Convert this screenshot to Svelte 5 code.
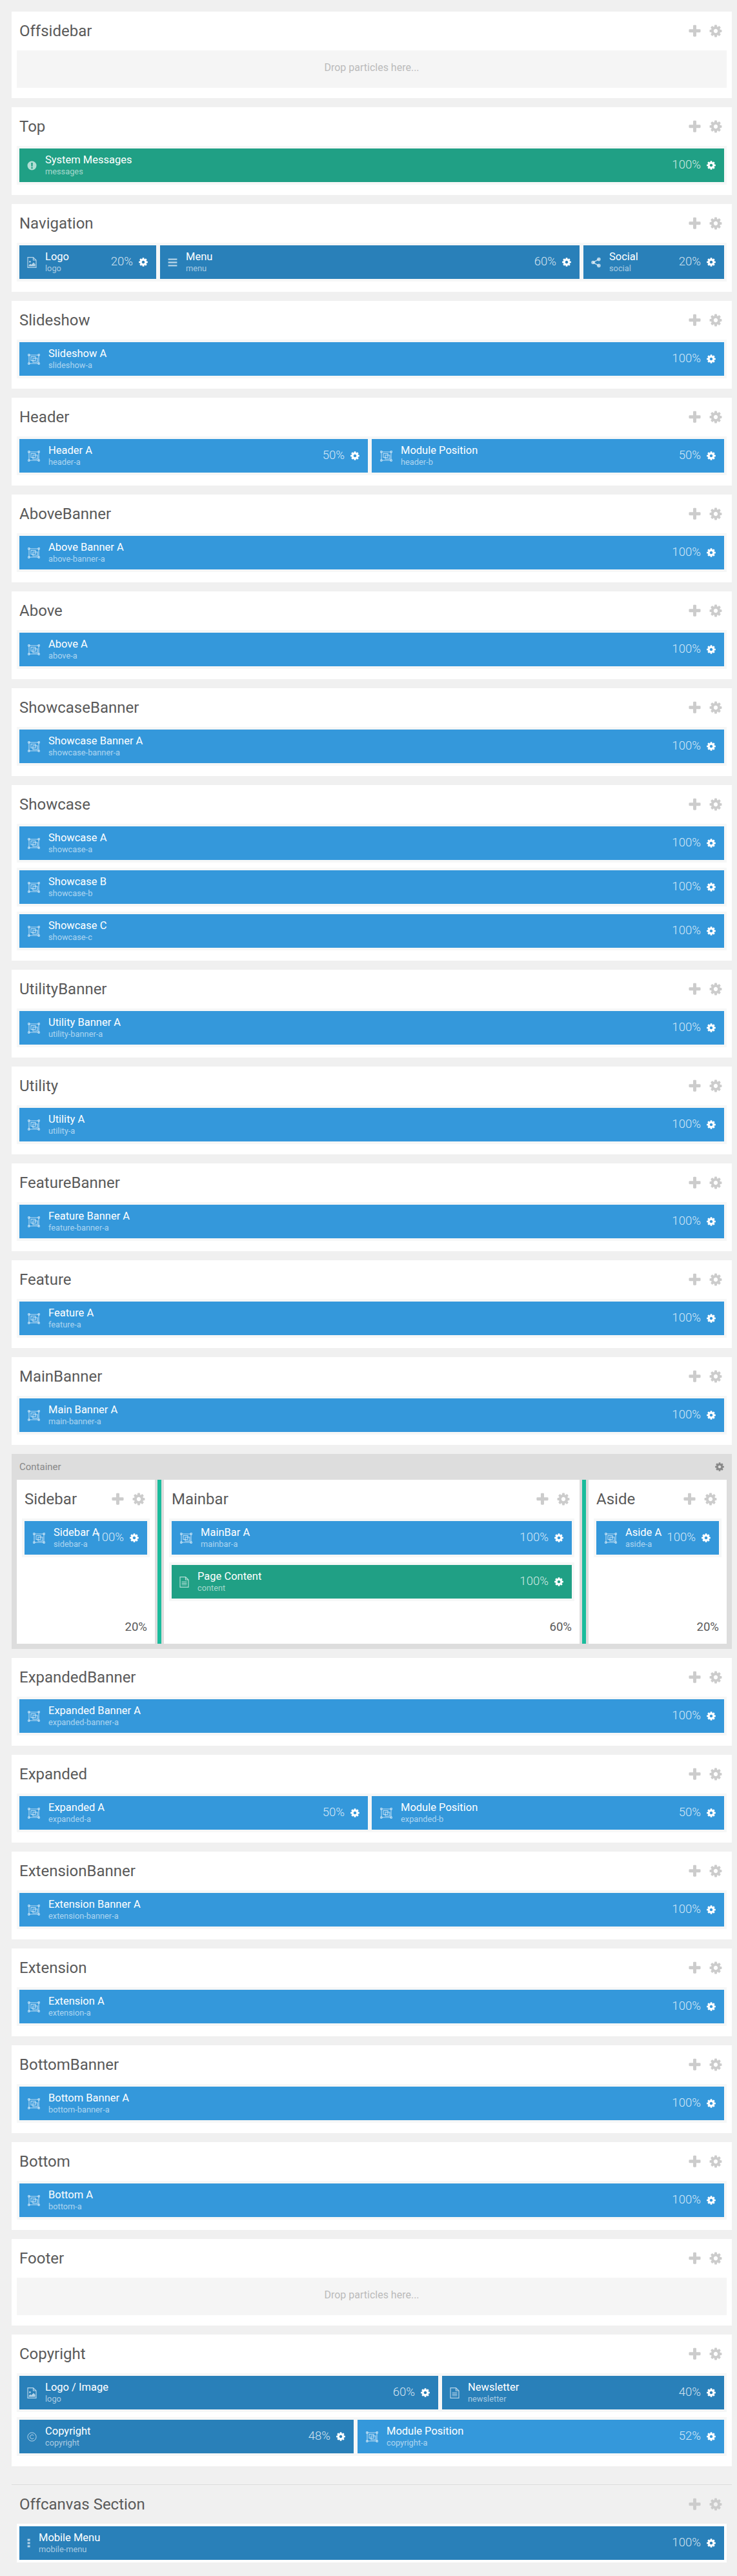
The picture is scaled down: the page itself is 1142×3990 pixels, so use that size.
<script>
	const gear = "M1152 896q0-106-75-181t-181-75-181 75-75 181 75 181 181 75 181-75 75-181zm512-109v222q0 12-8 24t-20 13l-185 28q-19 54-39 91 35 50 107 138 10 12 10 25t-9 23q-27 37-99 108t-94 71q-12 0-26-9l-138-108q-44 23-91 38-16 136-29 186-7 28-36 28h-222q-14 0-24.5-8.5t-11.5-21.5l-28-184q-49-16-90-37l-141 107q-10 9-25 9-14 0-25-11-126-114-165-168-7-10-7-23 0-12 8-23 15-21 51-66.5t54-70.5q-27-50-41-99l-183-27q-13-2-21-12.5t-8-23.5v-222q0-13 8-23.5t19-12.5l186-28q14-46 39-92-40-57-107-138-10-12-10-24 0-10 9-23 26-36 98.5-107.5t94.5-71.5q13 0 26 10l138 107q44-23 91-38 16-136 29-186 7-28 36-28h222q14 0 24.5 8.5t11.5 21.5l28 184q49 16 90 37l142-107q9-9 24-9 13 0 25 10 129 119 165 170 7 8 7 22 0 12-8 23-15 21-51 66.5t-54 70.5q26 50 41 98l183 28q13 2 21 12.5t8 23.5z";
	const plus = "M1600 736v192q0 40-28 68t-68 28h-416v416q0 40-28 68t-68 28h-192q-40 0-68-28t-28-68v-416h-416q-40 0-68-28t-28-68v-192q0-40 28-68t68-28h416v-416q0-40 28-68t68-28h192q40 0 68 28t28 68v416h416q40 0 68 28t28 68z";

	// kind: m = module position (lighter blue), a = atom/particle (darker blue), s = system (green)
	const one = (name, sub, icon = "module", kind = "m") => [{ name, sub, icon, kind, pct: "100%", w: 1092 }];
	const half = (a, b) => [
		{ name: a, sub: b[0], icon: "module", kind: "m", pct: "50%", w: 540 },
		{ name: "Module Position", sub: b[1], icon: "module", kind: "m", pct: "50%", w: 546 }
	];

	const before = [
		{ title: "Offsidebar", drop: true },
		{ title: "Top", rows: [one("System Messages", "messages", "alert", "s")] },
		{ title: "Navigation", rows: [[
			{ name: "Logo", sub: "logo", icon: "image", kind: "a", pct: "20%", w: 212 },
			{ name: "Menu", sub: "menu", icon: "bars", kind: "a", pct: "60%", w: 650 },
			{ name: "Social", sub: "social", icon: "share", kind: "a", pct: "20%", w: 218 }
		]] },
		{ title: "Slideshow", rows: [one("Slideshow A", "slideshow-a")] },
		{ title: "Header", rows: [half("Header A", ["header-a", "header-b"])] },
		{ title: "AboveBanner", rows: [one("Above Banner A", "above-banner-a")] },
		{ title: "Above", rows: [one("Above A", "above-a")] },
		{ title: "ShowcaseBanner", rows: [one("Showcase Banner A", "showcase-banner-a")] },
		{ title: "Showcase", rows: [one("Showcase A", "showcase-a"), one("Showcase B", "showcase-b"), one("Showcase C", "showcase-c")] },
		{ title: "UtilityBanner", rows: [one("Utility Banner A", "utility-banner-a")] },
		{ title: "Utility", rows: [one("Utility A", "utility-a")] },
		{ title: "FeatureBanner", rows: [one("Feature Banner A", "feature-banner-a")] },
		{ title: "Feature", rows: [one("Feature A", "feature-a")] },
		{ title: "MainBanner", rows: [one("Main Banner A", "main-banner-a")] }
	];

	const columns = [
		{ title: "Sidebar", pct: "20%", rows: [one("Sidebar A", "sidebar-a")] },
		{ title: "Mainbar", pct: "60%", rows: [one("MainBar A", "mainbar-a"), one("Page Content", "content", "file", "s")] },
		{ title: "Aside", pct: "20%", rows: [one("Aside A", "aside-a")] }
	];

	const after = [
		{ title: "ExpandedBanner", rows: [one("Expanded Banner A", "expanded-banner-a")] },
		{ title: "Expanded", rows: [half("Expanded A", ["expanded-a", "expanded-b"])] },
		{ title: "ExtensionBanner", rows: [one("Extension Banner A", "extension-banner-a")] },
		{ title: "Extension", rows: [one("Extension A", "extension-a")] },
		{ title: "BottomBanner", rows: [one("Bottom Banner A", "bottom-banner-a")] },
		{ title: "Bottom", rows: [one("Bottom A", "bottom-a")] },
		{ title: "Footer", drop: true },
		{ title: "Copyright", rows: [
			[
				{ name: "Logo / Image", sub: "logo", icon: "image", kind: "a", pct: "60%", w: 649 },
				{ name: "Newsletter", sub: "newsletter", icon: "file", kind: "a", pct: "40%", w: 437 }
			],
			[
				{ name: "Copyright", sub: "copyright", icon: "copy", kind: "a", pct: "48%", w: 518 },
				{ name: "Module Position", sub: "copyright-a", icon: "module", kind: "m", pct: "52%", w: 568 }
			]
		] }
	];

	const offcanvas = one("Mobile Menu", "mobile-menu", "dots", "a");
</script>

{#snippet fa(path, cls)}
	<svg class={cls} viewBox="0 0 1792 1792" aria-hidden="true"><path d={path} /></svg>
{/snippet}

{#snippet icon(type)}
	{#if type === "module"}
		<svg class="ico module" viewBox="0 0 19 17" aria-hidden="true">
			<g fill="none" stroke="currentColor" stroke-width="1.1">
				<path d="M2 2h15M2 15h15M2 2v13M17 2v13" />
				<rect x="5" y="4.5" width="7" height="6" />
				<rect x="8" y="7" width="7" height="6" />
				<rect x="0.6" y="0.6" width="2.4" height="2.4" rx=".6" />
				<rect x="16" y="0.6" width="2.4" height="2.4" rx=".6" />
				<rect x="0.6" y="14" width="2.4" height="2.4" rx=".6" />
				<rect x="16" y="14" width="2.4" height="2.4" rx=".6" />
			</g>
		</svg>
	{:else if type === "image"}
		<svg class="ico file" viewBox="0 0 15 17" aria-hidden="true">
			<path d="M1 .7h8.5L14 5v11.3H1z M9.5 .7V5H14" fill="none" stroke="currentColor" stroke-width="1.2" />
			<circle cx="4.4" cy="7.4" r="1.4" fill="currentColor" />
			<path d="M2.6 14.6v-1.8l2.4-2.2 1.6 1.4 3.4-3.6 2.6 2.8v3.4z" fill="currentColor" />
		</svg>
	{:else if type === "file"}
		<svg class="ico file" viewBox="0 0 15 17" aria-hidden="true">
			<path d="M1 .7h8.5L14 5v11.3H1z M9.5 .7V5H14" fill="none" stroke="currentColor" stroke-width="1.2" />
			<path d="M3.6 8h7.8M3.6 10.4h7.8M3.6 12.8h7.8" fill="none" stroke="currentColor" stroke-width="1.1" />
		</svg>
	{:else if type === "alert"}
		<svg class="ico file" viewBox="0 0 15 17" aria-hidden="true">
			<path fill-rule="evenodd" fill="currentColor" d="M7.5 1.5a7 7 0 1 0 0 14 7 7 0 0 0 0-14zM6.2 4h2.6l-.3 6h-2zM6.3 11h2.4v2.3H6.3z" />
		</svg>
	{:else if type === "bars"}
		<svg class="ico file" viewBox="0 0 15 17" aria-hidden="true">
			<path fill="currentColor" d="M.6 2.4h13.8v2.4H.6zM.6 7.3h13.8v2.4H.6zM.6 12.2h13.8v2.4H.6z" />
		</svg>
	{:else if type === "share"}
		<svg class="ico file" viewBox="0 0 15 17" aria-hidden="true">
			<path d="M3 8.5 11.6 3.6M3 8.5l8.6 4.9" fill="none" stroke="currentColor" stroke-width="1.6" />
			<circle cx="3" cy="8.5" r="2.8" fill="currentColor" />
			<circle cx="11.9" cy="3.6" r="2.8" fill="currentColor" />
			<circle cx="11.9" cy="13.4" r="2.8" fill="currentColor" />
		</svg>
	{:else if type === "copy"}
		<svg class="ico file" viewBox="0 0 15 17" aria-hidden="true">
			<circle cx="7.5" cy="8.5" r="6.6" fill="none" stroke="currentColor" stroke-width="1" />
			<path d="M10.2 6.4A3.2 3.2 0 1 0 10.2 10.6" fill="none" stroke="currentColor" stroke-width="1" />
		</svg>
	{:else if type === "dots"}
		<svg class="ico dots" viewBox="0 0 6 14" aria-hidden="true">
			<path fill="currentColor" d="M.6.4h4v3h-4zM.6 5.4h4v3h-4zM.6 10.4h4v3h-4z" />
		</svg>
	{/if}
{/snippet}

{#snippet block(b)}
	<!-- 25px of each block is padding, which flex-grow does not share out -->
	<div class="block {b.kind}" style="flex-grow: {b.w - 25}">
		<span class="lead lead-{b.icon}">{@render icon(b.icon)}</span>
		<div class="names">
			<div class="name">{b.name}</div>
			<div class="sub">{b.sub}</div>
		</div>
		<span class="pct">{b.pct}</span>
		{@render fa(gear, "cog")}
	</div>
{/snippet}

{#snippet head(title)}
	<div class="head">
		<h2>{title}</h2>
		{@render fa(plus, "tool plus")}
		{@render fa(gear, "tool gear")}
	</div>
{/snippet}

{#snippet rowsOf(rows)}
	<div class="rows">
		{#each rows as row}
			<div class="grid">
				{#each row as b}
					{@render block(b)}
				{/each}
			</div>
		{/each}
	</div>
{/snippet}

{#snippet section(s)}
	<section class="section">
		{@render head(s.title)}
		{#if s.drop}
			<div class="drop">Drop particles here...</div>
		{:else}
			{@render rowsOf(s.rows)}
		{/if}
	</section>
{/snippet}

<div class="page">
	{#each before as s}
		{@render section(s)}
	{/each}

	<div class="container">
		<div class="container-head">
			<span>Container</span>
			{@render fa(gear, "cog-dark")}
		</div>
		<div class="columns">
			{#each columns as c, i}
				{#if i > 0}
					<div class="handle"></div>
				{/if}
				<div class="col col-{i}">
					{@render head(c.title)}
					{@render rowsOf(c.rows)}
					<div class="col-pct">{c.pct}</div>
				</div>
			{/each}
		</div>
	</div>

	{#each after as s}
		{@render section(s)}
	{/each}

	<section class="off">
		{@render head("Offcanvas Section")}
		<div class="rows">
			<div class="grid white">
				{#each offcanvas as b}
					{@render block(b)}
				{/each}
			</div>
		</div>
	</section>
</div>

<style>
	:global(body) {
		margin: 0;
		background: #f0f0f0;
	}
	.page {
		padding: 18px 8px 21px 18px;
		font-family: Roboto, "Liberation Sans", sans-serif;
		color: #555;
	}
	.section {
		background: #fff;
		padding: 0 8px 16px;
		margin-bottom: 14px;
	}
	.head {
		display: flex;
		align-items: center;
		height: 60px;
		padding: 0 6px 0 4px;
	}
	h2 {
		flex: 1;
		margin: 0;
		font-size: 24px;
		font-weight: 400;
		color: #5a5a5a;
		white-space: nowrap;
	}
	.tool {
		fill: #ccc;
		flex: none;
	}
	.plus {
		width: 23px;
		height: 23px;
		margin-right: 10px;
	}
	.gear {
		width: 22px;
		height: 22px;
	}
	.drop {
		height: 58px;
		padding-top: 17px;
		box-sizing: border-box;
		background: #f5f5f5;
		color: #bbb;
		font-size: 16px;
		line-height: 20px;
		text-align: center;
	}
	.rows {
		display: flex;
		flex-direction: column;
		gap: 8px;
	}
	.grid {
		display: flex;
		gap: 6px;
		padding: 4px;
		background: #f6f7f7;
	}
	.grid.white {
		background: #fff;
	}
	.block {
		display: flex;
		align-items: center;
		flex: 1 1 0;
		min-width: 0;
		height: 52px;
		padding: 0 13px 0 12px;
		box-sizing: border-box;
		color: #fff;
	}
	.block.m {
		background: #3498db;
	}
	.block.a {
		background: #2980b9;
	}
	.block.s {
		background: #20a085;
	}
	.lead {
		display: flex;
		flex: none;
		width: 28px;
		color: rgba(255, 255, 255, 0.65);
	}
	.lead-module {
		width: 32px;
		margin-left: 1px;
	}
	.lead-dots {
		width: 18px;
	}
	.ico {
		display: block;
	}
	.ico.module {
		width: 19px;
		height: 17px;
	}
	.ico.file {
		width: 15px;
		height: 17px;
	}
	.ico.dots {
		width: 6px;
		height: 14px;
	}
	.names {
		flex: 1 1 0;
		min-width: 0;
		white-space: nowrap;
	}
	.name {
		font-size: 16.5px;
		line-height: 20px;
	}
	.sub {
		font-size: 12.8px;
		line-height: 16px;
		color: rgba(255, 255, 255, 0.6);
	}
	.pct {
		flex: none;
		margin: -3px 8px 0 0;
		font-size: 18.6px;
		font-weight: 300;
		color: rgba(255, 255, 255, 0.8);
	}
	.cog {
		flex: none;
		width: 16px;
		height: 16px;
		margin-right: -1px;
		fill: #fff;
	}
	.container {
		margin-bottom: 14px;
		padding: 0 8px 8px;
		background: #ddd;
	}
	.container-head {
		display: flex;
		align-items: center;
		justify-content: space-between;
		height: 40px;
		padding: 0 3px 0 4px;
		font-size: 15px;
		color: #888;
	}
	.cog-dark {
		width: 16px;
		height: 16px;
		fill: #888;
	}
	.columns {
		display: flex;
		height: 254px;
	}
	.col {
		display: flex;
		flex-direction: column;
		min-width: 0;
		padding: 0 8px;
		box-sizing: border-box;
		background: #fff;
	}
	.col-0,
	.col-2 {
		width: 214px;
	}
	.col-1 {
		width: 644px;
	}
	.handle {
		flex: none;
		width: 6px;
		margin: 0 4px;
		background: #1abc9c;
	}
	.col-pct {
		margin-top: auto;
		padding: 0 4px 14px 0;
		font-size: 18.6px;
		line-height: 24px;
		text-align: right;
		color: #5a5a5a;
	}
	.off {
		margin-top: 28px;
		padding: 0 8px;
		border-top: 1px solid #ddd;
	}
</style>
